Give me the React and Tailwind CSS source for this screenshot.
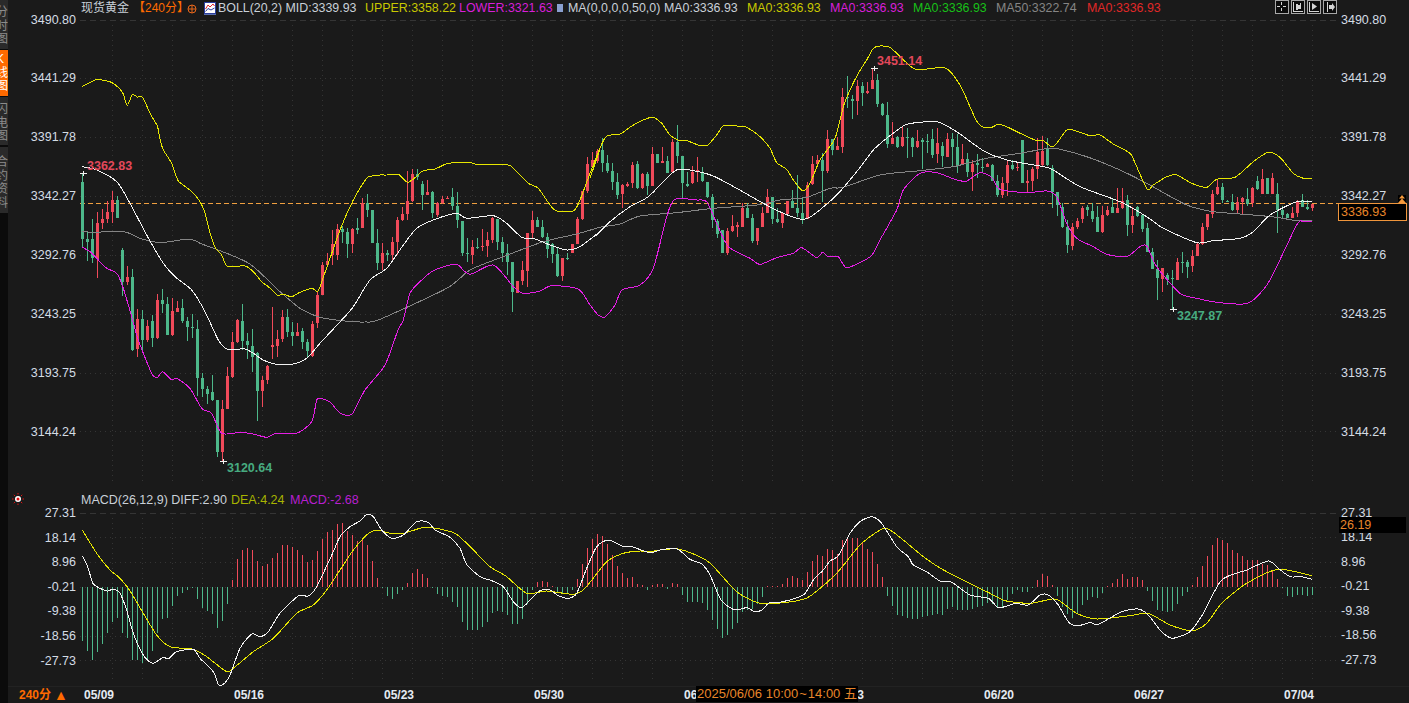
const RED = "#f04a5a";
const GREEN = "#4db88a";
const FONT = "[font-family:'Liberation_Sans','Noto_Sans_CJK_SC',sans-serif]";

const sections = [
  [160, "g65,238,38,262 g238,245,215,302 g237,295,178,308 r190,297,155,353 r178,188,148,207 r155,178,122,190 r120,155,93,188 g120,173,108,173 g270,365,265,407 r351,366,318,375 g351,570,328,572 r477,566,447,590 g478,540,450,570 r498,540,480,547 g484,533,465,560 r420,534,402,537 g420,432,388,460 g432,525,412,525 r453,525,415,527 r444,455,422,455 g445,483,417,488 g483,500,470,542 g500,505,462,535 g507,653,480,708 g653,686,640,712 g688,702,678,733 g697,720,645,722 g720,876,720,890 r748,876,720,905 r648,746,622,746 r546,652,515,655 r480,546,477,548 g483,543,432,570 g543,555,520,597 g558,590,507,635 g580,692,575,782 r660,692,648,740 r618,660,615,672 r555,562,440,597 r537,558,510,592 r472,537,450,545 g472,516,447,530 g516,528,485,558 r516,528,490,528 g513,546,505,567 g546,572,537,590 r492,587,482,590 r405,490,395,505"],
  [130, "r405,495,395,495 r393,405,370,410 r342,375,300,405 r297,375,283,390 g297,305,287,340 g306,343,295,385 r297,342,295,370 g295,300,265,312 r218,295,203,295 g220,240,193,260 g240,340,240,340 g340,400,298,420 r370,400,340,420 g370,375,360,392 r335,375,322,395 r270,336,262,375 r252,270,232,272 r213,253,123,270 r133,212,118,215 g132,142,118,150 g162,195,152,240 r185,195,150,195 g185,250,183,265 r220,255,215,260 r207,218,197,222 r203,205,198,207 g202,228,175,240 g228,270,185,293 g272,370,272,378 g368,370,325,395 r350,374,330,402 g350,354,325,358 r348,350,298,362 r330,347,305,380 r265,330,260,340 g268,335,268,360 g335,368,320,395 g370,395,343,435 g395,487,395,545 r452,488,452,490 r420,452,392,465 r308,422,308,470 r270,308,243,325 g270,292,262,292 g292,322,270,325 g322,358,310,385 g342,372,338,400 g372,437,350,440 r385,437,385,452 g384,388,370,390 r342,370,342,370 r268,342,262,342 r183,268,183,270 r102,183,82,190 r90,112,65,112 r62,92,58,100"],
  [40, "g330,368,295,395 g368,393,345,398 g393,425,370,450 g425,465,398,478 r435,462,433,503 r432,437,425,442 r375,430,365,445 g372,445,362,448 r403,445,400,447 g403,438,395,465 r343,437,320,438 g342,368,342,368 r362,368,322,370 g363,398,348,398 r307,395,298,397 g307,347,255,370 g348,430,348,475 g432,438,395,440 r395,430,378,432 r390,397,352,425 g395,422,382,425 g425,470,425,475 g472,540,462,565 g542,582,538,595 g570,638,570,638 r572,640,565,645 r558,573,525,577 r555,560,545,590 r505,560,488,562 g505,533,490,535 g533,602,522,610 r563,602,563,615 r518,562,500,562 r470,520,448,520 g470,538,470,552 g538,545,505,548 r520,550,520,565 r482,523,482,523 g482,503,450,505 g503,520,405,530 g520,538,470,552 r435,537,425,537 r372,433,348,435 r360,372,345,375 g360,392,340,485 r298,392,270,398 g298,330,298,345 r318,330,290,330 r170,320,145,338 g172,175,108,205 g178,183,165,237 r138,182,120,225 g138,158,125,198 r153,160,125,162 r120,147,85,148 g120,192,102,200 g192,225,188,228 g225,312,185,325 r293,312,247,312 g292,322,288,325 r292,318,262,320 g292,293,265,355 g294,320,290,350 r302,322,270,325"],
  [120, "g60,65,55,148 g62,66,42,100 g57,105,28,115 r70,103,25,128 g78,108,65,140 r57,110,40,112 g58,80,40,140 g80,135,42,158 r118,135,72,135 g118,155,100,170 r133,155,120,212 g130,135,103,175 g140,143,115,158 r132,140,130,142 g135,182,132,183 g182,225,165,230 r188,225,172,235 r135,188,120,228 g135,148,120,150 r140,143,125,152 g60,188,60,190 r182,188,150,215 r147,182,140,212 r95,148,55,178 r92,135,48,138 g85,135,55,138 g145,215,135,265 g215,255,215,288 g260,322,250,325 g320,375,300,398 r322,378,308,390 r303,322,295,328 r265,297,258,308 g262,270,255,288 g272,298,250,305 g292,335,258,337 r285,337,258,338 r270,285,258,288 g262,278,238,280 r265,278,205,280 r243,265,205,268 g240,315,225,348 r287,315,262,340 g262,288,258,290 g285,328,285,335 g325,395,310,395 g395,447,385,448 g447,475,420,540 r445,478,445,515 g465,480,460,495 g475,478,450,568 r427,480,415,480 g427,428,395,460 g425,442,420,475 r408,437,390,455 r372,408,365,408 r322,372,310,375 r282,322,282,330 r222,282,210,295 r200,222,180,224 g200,240,190,250 g242,247,240,247 g247,270,222,272 r245,270,230,280 r235,245,232,282 g237,252,205,258 r205,248,200,262 g182,208,168,210 r178,222,148,222 g175,222,175,222 r175,222,158,222 g222,270,188,340 g270,285,258,298 g282,295,280,295 r280,295,262,295 r245,280,240,290 g240,262,222,262 g262,266,240,270 r252,265,252,272"],
];

const candles = sections.flatMap(([oy, s]) =>
  s.split(" ").map((c) => {
    const [t, b, h, l] = c.slice(1).split(",").map((v) => Math.round(oy + Number(v) / 3));
    return { up: c[0] === "r", t, b: Math.max(b, t + 1), h, l: Math.max(l, h + 1) };
  })
);

const macd = [
  -162,-192,-220,-195,-172,-138,-105,-93,-138,-153,-220,-220,-228,-215,-192,-138,-95,-93,-57,-27,-17,-8,-3,-37,-63,-72,-82,-123,-102,-50,22,85,110,118,112,78,62,68,88,102,127,127,120,112,95,75,82,108,145,165,172,190,192,168,157,138,143,125,78,27,-4,-28,-35,-20,-8,12,42,53,38,26,-4,-20,-27,-30,-45,-60,-105,-128,-130,-130,-120,-105,-77,-73,-75,-85,-112,-112,-97,-52,-8,15,18,15,3,-18,-22,-22,-10,24,68,117,143,160,152,130,97,63,42,27,30,10,6,-10,6,8,8,-5,12,8,-23,-45,-45,-45,-48,-68,-98,-125,-152,-143,-125,-107,-75,-70,-65,-50,-30,3,3,3,10,28,32,28,20,45,77,97,93,115,110,100,140,150,148,148,135,113,105,70,30,-27,-58,-85,-88,-92,-97,-95,-90,-88,-85,-80,-84,-65,-60,-68,-68,-70,-65,-60,-58,-48,-50,-60,-60,-40,-22,-8,-15,-15,-3,22,40,33,7,-27,-60,-80,-92,-80,-55,-40,-30,-33,-18,3,12,25,40,25,30,30,20,-12,-42,-68,-73,-75,-72,-50,-28,-15,6,30,63,93,126,148,142,132,112,102,93,80,80,82,70,67,50,23,-3,-27,-30,-25,-25,-27,-25,
];

const seg = (ox, oy, f) => {
  const out = [];
  for (let i = 0; i < f.length; i += 2) out.push([ox + f[i] / 3, oy + f[i + 1] / 3]);
  return out;
};
const abs = (f) => seg(0, 0, f.map((v) => v * 3));

const smooth = (p) => {
  let d = `M${p[0][0].toFixed(1)} ${p[0][1].toFixed(1)}`;
  for (let i = 0; i < p.length - 1; i++) {
    const a = p[Math.max(i - 1, 0)], b = p[i], c = p[i + 1], e = p[Math.min(i + 2, p.length - 1)];
    d += `C${(b[0] + (c[0] - a[0]) / 8).toFixed(1)} ${(b[1] + (c[1] - a[1]) / 8).toFixed(1)} ${(c[0] - (e[0] - b[0]) / 8).toFixed(1)} ${(c[1] - (e[1] - b[1]) / 8).toFixed(1)} ${c[0].toFixed(1)} ${c[1].toFixed(1)}`;
  }
  return d;
};

const upper = [
  ...seg(0, 0, [247,259,265,250,290,238,310,241,330,245,350,258,368,278,382,316,397,284,412,291,428,292,450,340,472,378,480,418,490,450,515,490,533,540,550,555,575,575,597,600,612,630]),
  ...seg(80, 160, [380,180,392,225,405,262,425,285,442,318,495,318,520,335,545,365,565,380,592,405,610,403,635,410,660,397,695,385,712,395,720,380]),
  ...seg(320, 130, [0,470,25,400,60,300,100,210,140,145,155,138,180,135,200,135,235,133,262,157,285,143,310,122,345,117,385,100,450,98,470,103,565,105,590,125,625,160,655,175,690,225,710,243,760,243,780,210,810,130,840,55]),
  ...seg(580, 40, [30,415,60,325,80,288,120,282,155,258,190,240,218,232,245,250,270,285,295,300,320,302,355,315,382,316,410,285,430,258,470,258,500,262,540,290,570,325,590,368,620,388,640,420,668,452,690,430,720,360,765,295,790,200,810,150,835,100,860,60,880,25,900,18,930,22,965,55,1000,85,1020,90]),
  ...abs([945,68,960,85]),
  ...seg(920, 120, [168,0,190,22,215,22,235,13,260,20,305,42,350,62,370,62,400,80,440,30,465,32,510,47,540,45,580,72,630,100,650,140,682,208,700,195,740,170,770,165,815,190,860,202,890,178,945,172,1000,125,1045,97,1080,112,1120,160,1150,175,1175,175]),
];
const mid = [
  ...seg(80, 160, [7,20,50,30,110,65,150,130,200,225,250,310,285,350,335,390,375,455,415,540,442,567,495,567,520,580,550,600,585,612,640,612,680,595,720,550]),
  ...seg(320, 130, [65,570,100,530,150,450,200,415,250,345,290,295,340,270,410,250,440,265,520,257,560,280,605,322,640,325,690,345,740,360,780,350,840,305]),
  ...seg(580, 40, [50,585,90,545,150,500,205,470,270,405,295,388,340,392,400,408,470,445,550,490,610,520,665,538,700,525,770,465,830,395,880,330,920,295,975,255,1020,247]),
  ...seg(920, 120, [50,5,110,35,190,92,260,120,370,140,400,150,480,200,600,245,680,290,730,325,830,368,880,362,960,355,1000,335,1050,285,1130,245,1175,245]),
];
const ma50 = [
  ...seg(80, 160, [7,215,50,217,100,213,140,217,180,235,230,247,270,245,300,240,340,240,365,252,420,272,510,312,600,395,660,445,720,472]),
  ...abs([345,321,365,322]),
  ...seg(320, 130, [180,568,380,475,450,420,550,380,670,335,770,312,840,292]),
  ...seg(580, 40, [120,552,180,528,290,518,400,505,530,495,600,480,680,472,750,445,790,442,900,405,1020,392]),
  ...seg(920, 120, [100,140,200,115,300,100,400,85,500,110,600,150,680,190,800,255,880,275,1000,285,1070,292,1130,302,1175,302]),
];
const lower = [
  ...seg(80, 160, [7,262,30,275,55,300,80,325,110,340,130,385,155,470,175,540,215,640,232,652,248,635,275,660,290,655,330,685,365,745,395,760,425,820,480,817,520,822,560,832,590,820,650,820,695,785,710,720,720,715]),
  ...abs([330,402,340,413,352,414,365,390,385,365,398,330]),
  ...seg(320, 130, [250,570,270,490,300,455,340,422,400,403,415,405,450,433,520,405,580,470,610,490,660,483,695,467,775,477,810,525,835,555]),
  ...abs([605,317,615,305,622,290,640,285]),
  ...seg(580, 40, [220,685,260,530,285,478,350,480,380,485,410,550,445,620,510,655,540,673,590,653,640,640,665,623,710,653,727,637,745,650,775,650,800,683,860,657,880,640,900,600,950,510,970,450,1020,400]),
  ...seg(920, 120, [50,158,110,180,140,183,180,158,215,172,240,208,320,218,380,213,410,230,440,310,470,355,520,380,560,403,620,410,660,380,680,378,710,440,780,520,830,535,890,547,970,552,1000,540,1050,480,1130,315,1150,305,1175,305]),
];
const diff = [
  ...seg(0, 485, [247,213,265,250,280,297,320,318,340,312,360,325,380,375,400,445,430,510,458,535,490,517,505,522,530,500,580,493,600,520,640,560,655,598,670,598,690,570,720,490,755,447,780,455,805,440,840,385,895,333,925,333,950,305,1000,200]),
  ...seg(340, 505, [0,95,30,65,60,48,80,28,100,35,125,75,155,100,190,90,230,50,265,52,285,75,330,97,360,130,380,178,420,215,455,227,490,245,520,290,545,308,575,280,600,257,630,255,655,272,685,280,710,265,740,190,770,125,805,105,850,125,875,125,930,143]),
  ...seg(640, 540, [60,30,100,25,120,32,150,58,185,72,210,105,240,175,265,200,290,210,320,203,345,215,365,210,390,187,420,187]),
  ...seg(780, 505, [70,270,100,225,130,195,150,168,175,152,210,85,240,50,275,35,305,55,350,125,385,155,400,180,440,200,480,228]),
  ...seg(930, 555, [65,82,120,120,175,130,205,158,240,150,260,145,295,150,330,120,355,120,385,150,415,200,440,213,480,203,505,208]),
  ...seg(1100, 490, [65,365,115,357,145,375,180,420,215,445,270,425,310,370,365,270,440,240,505,213,535,235,570,260,605,260,635,268]),
];
const dea = [
  ...seg(0, 485, [247,135,290,205,330,255,355,275,385,310,430,385,470,450,510,485,580,493,620,515,680,560,700,550,760,500,820,460,890,385,940,360,980,315,1030,240]),
  ...seg(340, 505, [40,135,80,90,110,75,150,85,190,85,240,70,270,67,345,85,400,135,450,185,500,215,560,265,620,258,700,268,735,250,800,170,850,145,900,138,930,140]),
  ...seg(640, 540, [60,30,120,28,205,65,290,155,360,190,430,188,490,178]),
  ...seg(780, 505, [95,270,170,205,240,120,300,75,325,72,370,105,430,155]),
  ...seg(930, 555, [35,42,100,75,180,115,225,137,300,145,360,133,385,135,440,175,500,192]),
  ...seg(1100, 490, [90,377,145,370,210,405,275,422,320,400,365,340,440,280,535,238,635,257]),
];

const verticals = Array.from({ length: 41 }, (_, i) => 112 + i * 30);

function Grid({ rows, top, bottom, dashedY }) {
  return (
    <g shapeRendering="crispEdges" stroke="#353535" strokeWidth="1">
      <line x1="80" x2="1338" y1={dashedY + 0.5} y2={dashedY + 0.5} strokeDasharray="6 4" />
      {rows.map((y) => (
        <line key={y} x1="80" x2="1338" y1={y + 0.5} y2={y + 0.5} strokeDasharray="1 4" />
      ))}
      {verticals.map((x) => (
        <line key={x} x1={x + 0.5} x2={x + 0.5} y1={top} y2={bottom} strokeDasharray="1 4" />
      ))}
    </g>
  );
}

function Curve({ pts, color }) {
  return <path d={smooth(pts)} fill="none" stroke={color} strokeWidth="1" shapeRendering="crispEdges" />;
}

function Marker({ x, y }) {
  return (
    <g fill="#f2f2f2" shapeRendering="crispEdges">
      <rect x={x - 3} y={y} width="7" height="1" />
      <rect x={x} y={y - 2} width="1" height="5" />
    </g>
  );
}

function PriceChart() {
  return (
    <svg viewBox="80 16 1258 474" width="1258" height="474" className="block">
      <Grid rows={[78, 137, 196, 255, 314, 373, 431]} top={20} bottom={482} dashedY={20} />
      <line x1="80" x2="1338" y1="203.5" y2="203.5" stroke="#f0a040" strokeDasharray="5 3" shapeRendering="crispEdges" />
      <g shapeRendering="crispEdges">
        {candles.map((c, i) => {
          const x = 81 + i * 5;
          const fill = c.up ? RED : GREEN;
          return (
            <g key={i} fill={fill}>
              <rect x={x + 1} y={c.h} width="1" height={c.l - c.h} />
              <rect x={x} y={c.t} width="3" height={c.b - c.t} />
            </g>
          );
        })}
      </g>
      <Curve pts={ma50} color="#858585" />
      <Curve pts={upper} color="#e6e600" />
      <Curve pts={lower} color="#e41ee4" />
      <Curve pts={mid} color="#f2f2f2" />
      <Marker x={83} y={173} />
      <Marker x={874} y={68} />
      <Marker x={223} y={461} />
      <Marker x={1173} y={309} />
      <g fontSize="12.5" fontWeight="700" fontFamily="'Liberation Sans', sans-serif">
        <text x="87" y="170" fill="#e2485a">3362.83</text>
        <text x="877" y="65" fill="#e2485a">3451.14</text>
        <text x="227" y="472" fill="#47ab80">3120.64</text>
        <text x="1177" y="320" fill="#47ab80">3247.87</text>
      </g>
    </svg>
  );
}

function MacdChart() {
  return (
    <svg viewBox="80 510 1258 176" width="1258" height="176" className="block">
      <Grid rows={[537, 562, 587, 611, 636, 660]} top={513} bottom={682} dashedY={513} />
      <g shapeRendering="crispEdges">
        {macd.map((v, i) => {
          const h = Math.max(1, Math.round(Math.abs(v) / 3));
          return (
            <rect key={i} x={82 + i * 5} y={v > 0 ? 587 - h : 587} width="1" height={h} fill={v > 0 ? RED : GREEN} />
          );
        })}
      </g>
      <Curve pts={dea} color="#e6e600" />
      <Curve pts={diff} color="#f2f2f2" />
    </svg>
  );
}

function Tab({ chars, active, className }) {
  return (
    <div className={`flex flex-col items-start overflow-hidden ${active ? "bg-[#ff6a00] text-white" : "bg-[#2a2a2a] text-[#8c8c8c]"} ${className}`}>
      {chars.split("").map((c, i) => (
        <span key={i} className="-ml-1 block h-[13.5px] w-3 shrink-0 text-xs leading-[13.5px]">{c}</span>
      ))}
    </div>
  );
}

function Sidebar() {
  return (
    <div className={`flex w-2 shrink-0 flex-col bg-[#0b0b0b] ${FONT}`}>
      <Tab chars="分时图" className="h-[49px] pt-[6px]" />
      <Tab chars="K线图" active className="mt-px h-[46px] pt-[3px]" />
      <Tab chars="闪电图" className="mt-px h-[48px] pt-[6px]" />
      <Tab chars="合约资料" className="mt-[2px] h-[66px] pt-[9px]" />
    </div>
  );
}

function BollIcon() {
  return (
    <svg width="12" height="13" viewBox="0 0 12 13" className="block">
      <rect x="0.5" y="0.5" width="11" height="11" fill="#fff" stroke="#2b3f9e" />
      <path d="M1.5 7 L4 3 L6 5 L9 2 L10.5 4" fill="none" stroke="#e02828" />
      <path d="M1.5 9.5 L4 6.5 L7 8 L10.5 6" fill="none" stroke="#2b3f9e" />
      <rect x="0" y="12" width="12" height="1" fill="#5a6fb0" />
    </svg>
  );
}

function ToolBtn({ children }) {
  return (
    <span className="flex h-[14px] w-[14px] items-center justify-center border border-[#a8a8a8] bg-[#0c0c0c]">
      <svg width="12" height="12" viewBox="0 0 12 12" stroke="#d4d4d4" fill="#d4d4d4" strokeWidth="1" shapeRendering="crispEdges">
        {children}
      </svg>
    </span>
  );
}

function Toolbar() {
  return (
    <div className="ml-auto mr-px flex items-start gap-[2px] self-start">
      <ToolBtn>
        <path d="M5.5 1V4M5.5 7V10M1 5.5H4M7 5.5H10" fill="none" />
      </ToolBtn>
      <ToolBtn>
        <path d="M1.5 1V10.5H11M8 2V8" fill="none" />
        <path d="M4 3H5V8H4ZM6 4H7V7H6Z" />
      </ToolBtn>
      <ToolBtn>
        <path d="M1.5 1V10.5H11" fill="none" />
        <path d="M4 2L9 5.5L4 9Z" stroke="none" shapeRendering="auto" />
      </ToolBtn>
      <ToolBtn>
        <path d="M3.5 1V11" fill="none" />
        <path d="M5 4H8V2L11 6L8 10V8H5Z" stroke="none" shapeRendering="auto" />
      </ToolBtn>
    </div>
  );
}

function Legend() {
  const ma = "w-[83px] shrink-0";
  return (
    <div className="flex h-4 items-center whitespace-nowrap pl-px text-[12.4px] leading-4 text-[#c9d0d8]">
      <span className="w-[52px] shrink-0 text-xs">现货黄金</span>
      <span className="w-[54px] shrink-0 text-xs text-[#ff6a00]">【240分】</span>
      <span className="flex w-[17px] shrink-0">
        <svg width="10" height="10" viewBox="0 0 10 10" className="mt-[2px]" fill="none" stroke="#e8661a">
          <circle cx="5" cy="5" r="4" />
          <path d="M1 5H9M5 1V9" />
        </svg>
      </span>
      <span className="w-[14px] shrink-0"><BollIcon /></span>
      <span className="w-[147px] shrink-0">BOLL(20,2) MID:3339.93</span>
      <span className="w-[94px] shrink-0 text-[#c8c800]">UPPER:3358.22</span>
      <span className="w-[97px] shrink-0 text-[#d81fd8]">LOWER:3321.63</span>
      <span className="w-3 shrink-0"><svg width="8" height="10" viewBox="0 0 8 10" className="block"><rect x="1" y="1" width="6" height="8" fill="#8aa0d0" /></svg></span>
      <span className="w-[96px] shrink-0">MA(0,0,0,0,50,0)</span>
      <span className={ma}>MA0:3336.93</span>
      <span className={`${ma} text-[#c8c800]`}>MA0:3336.93</span>
      <span className={`${ma} text-[#d81fd8]`}>MA0:3336.93</span>
      <span className={`${ma} text-[#18c018]`}>MA0:3336.93</span>
      <span className="w-[91px] shrink-0 text-[#858585]">MA50:3322.74</span>
      <span className="shrink-0 text-[#e02828]">MA0:3336.93</span>
      <Toolbar />
    </div>
  );
}

const priceLabels = ["3490.80", "3441.29", "3391.78", "3342.27", "3292.76", "3243.25", "3193.75", "3144.24"];
const macdLabels = ["27.31", "18.14", "8.96", "-0.21", "-9.38", "-18.56", "-27.73"];
const dates = ["05/09", "05/16", "05/23", "05/30", "06/06", "06/13", "06/20", "06/27", "07/04"];

export default function App() {
  return (
    <div className={`flex h-[703px] w-[1409px] overflow-hidden bg-[#1a1a1a] ${FONT}`}>
      <Sidebar />
      <div className="flex min-w-0 flex-1 flex-col">
        <div className="flex h-[490px]">
          <div className="flex w-[72px] shrink-0 flex-col items-end gap-[42.9px] pr-1 pt-[11.5px] text-[12.5px] leading-4 text-[#d4dce4]">
            {priceLabels.map((p) => <span key={p}>{p}</span>)}
          </div>
          <div className="w-[1258px] shrink-0">
            <Legend />
            <PriceChart />
          </div>
          <div className="relative flex flex-1 flex-col gap-[42.9px] pl-[3px] pt-[11.5px] text-[12.5px] leading-4 text-[#d4dce4]">
            {priceLabels.map((p) => <span key={p}>{p}</span>)}
            <span className="absolute left-[60px] top-[195px] flex h-2 w-2 items-end justify-center bg-black">
              <svg width="8" height="8" viewBox="0 0 8 8" fill="#f59a3c"><path d="M4 0L7 3.5H1ZM4 3.5L8 8H0Z" /></svg>
            </span>
            <div className="absolute left-0 top-[203px] flex h-[18px] w-[69px] items-center border border-[#f0963c] bg-black pl-[2px] text-[#e8862a]">3336.93</div>
          </div>
        </div>
        <div className="flex h-[196px]">
          <div className="flex w-[72px] shrink-0 flex-col">
            <svg width="14" height="12" viewBox="0 0 14 12" className="ml-[3px] mt-[3px] block shrink-0">
              <circle cx="7" cy="6" r="3" fill="#fff" />
              <circle cx="7" cy="6" r="1.5" fill="#e01010" />
              <path d="M7 0V1.5M7 10.5V12M1 6H2.5M11.5 6H13M2.8 1.8L4 3M11.2 1.8L10 3M2.8 10.2L4 9M11.2 10.2L10 9" stroke="#e01010" />
            </svg>
            <div className="flex flex-col items-end gap-[8.6px] pr-1 text-[12.5px] leading-4 text-[#d4dce4]">
              {macdLabels.map((p) => <span key={p}>{p}</span>)}
            </div>
          </div>
          <div className="w-[1258px] shrink-0">
            <div className="flex h-5 items-center whitespace-nowrap pl-px text-[12.5px] text-[#c9d0d8]">
              <span className="w-[150px] shrink-0">MACD(26,12,9) DIFF:2.90</span>
              <span className="w-[59px] shrink-0 text-[#a8b400]">DEA:4.24</span>
              <span className="text-[#b81fd0]">MACD:-2.68</span>
            </div>
            <MacdChart />
          </div>
          <div className="relative flex flex-1 flex-col gap-[8.6px] pl-[3px] pt-[14.5px] text-[12.5px] leading-4 text-[#d4dce4]">
            {macdLabels.map((p) => <span key={p}>{p}</span>)}
            <div className="absolute left-px top-[27px] flex h-4 w-[67px] items-center bg-black pl-px text-[#e8862a]">26.19</div>
          </div>
        </div>
        <div className="flex h-[17px] items-center border-t border-[#222222]">
          <div className="flex w-[72px] shrink-0 items-center gap-[3px] pl-[11px] text-xs font-bold text-[#ff6a00]">
            <span>240分</span>
            <span className="text-sm leading-3">▲</span>
          </div>
          <div className="relative flex w-[1258px] shrink-0 pl-1 text-xs font-bold text-[#e4eaf2]">
            {dates.map((d) => <span key={d} className="w-[150px] shrink-0">{d}</span>)}
            <div className="absolute left-[616px] top-[-1px] flex h-4 w-[162px] items-center whitespace-nowrap bg-black pl-px text-[13px] font-normal text-[#e8862a]">
              <span>2025/06/06 10:00<span className="mx-px">~</span>14:00 五</span>
            </div>
          </div>
        </div>
      </div>
    </div>
  );
}
